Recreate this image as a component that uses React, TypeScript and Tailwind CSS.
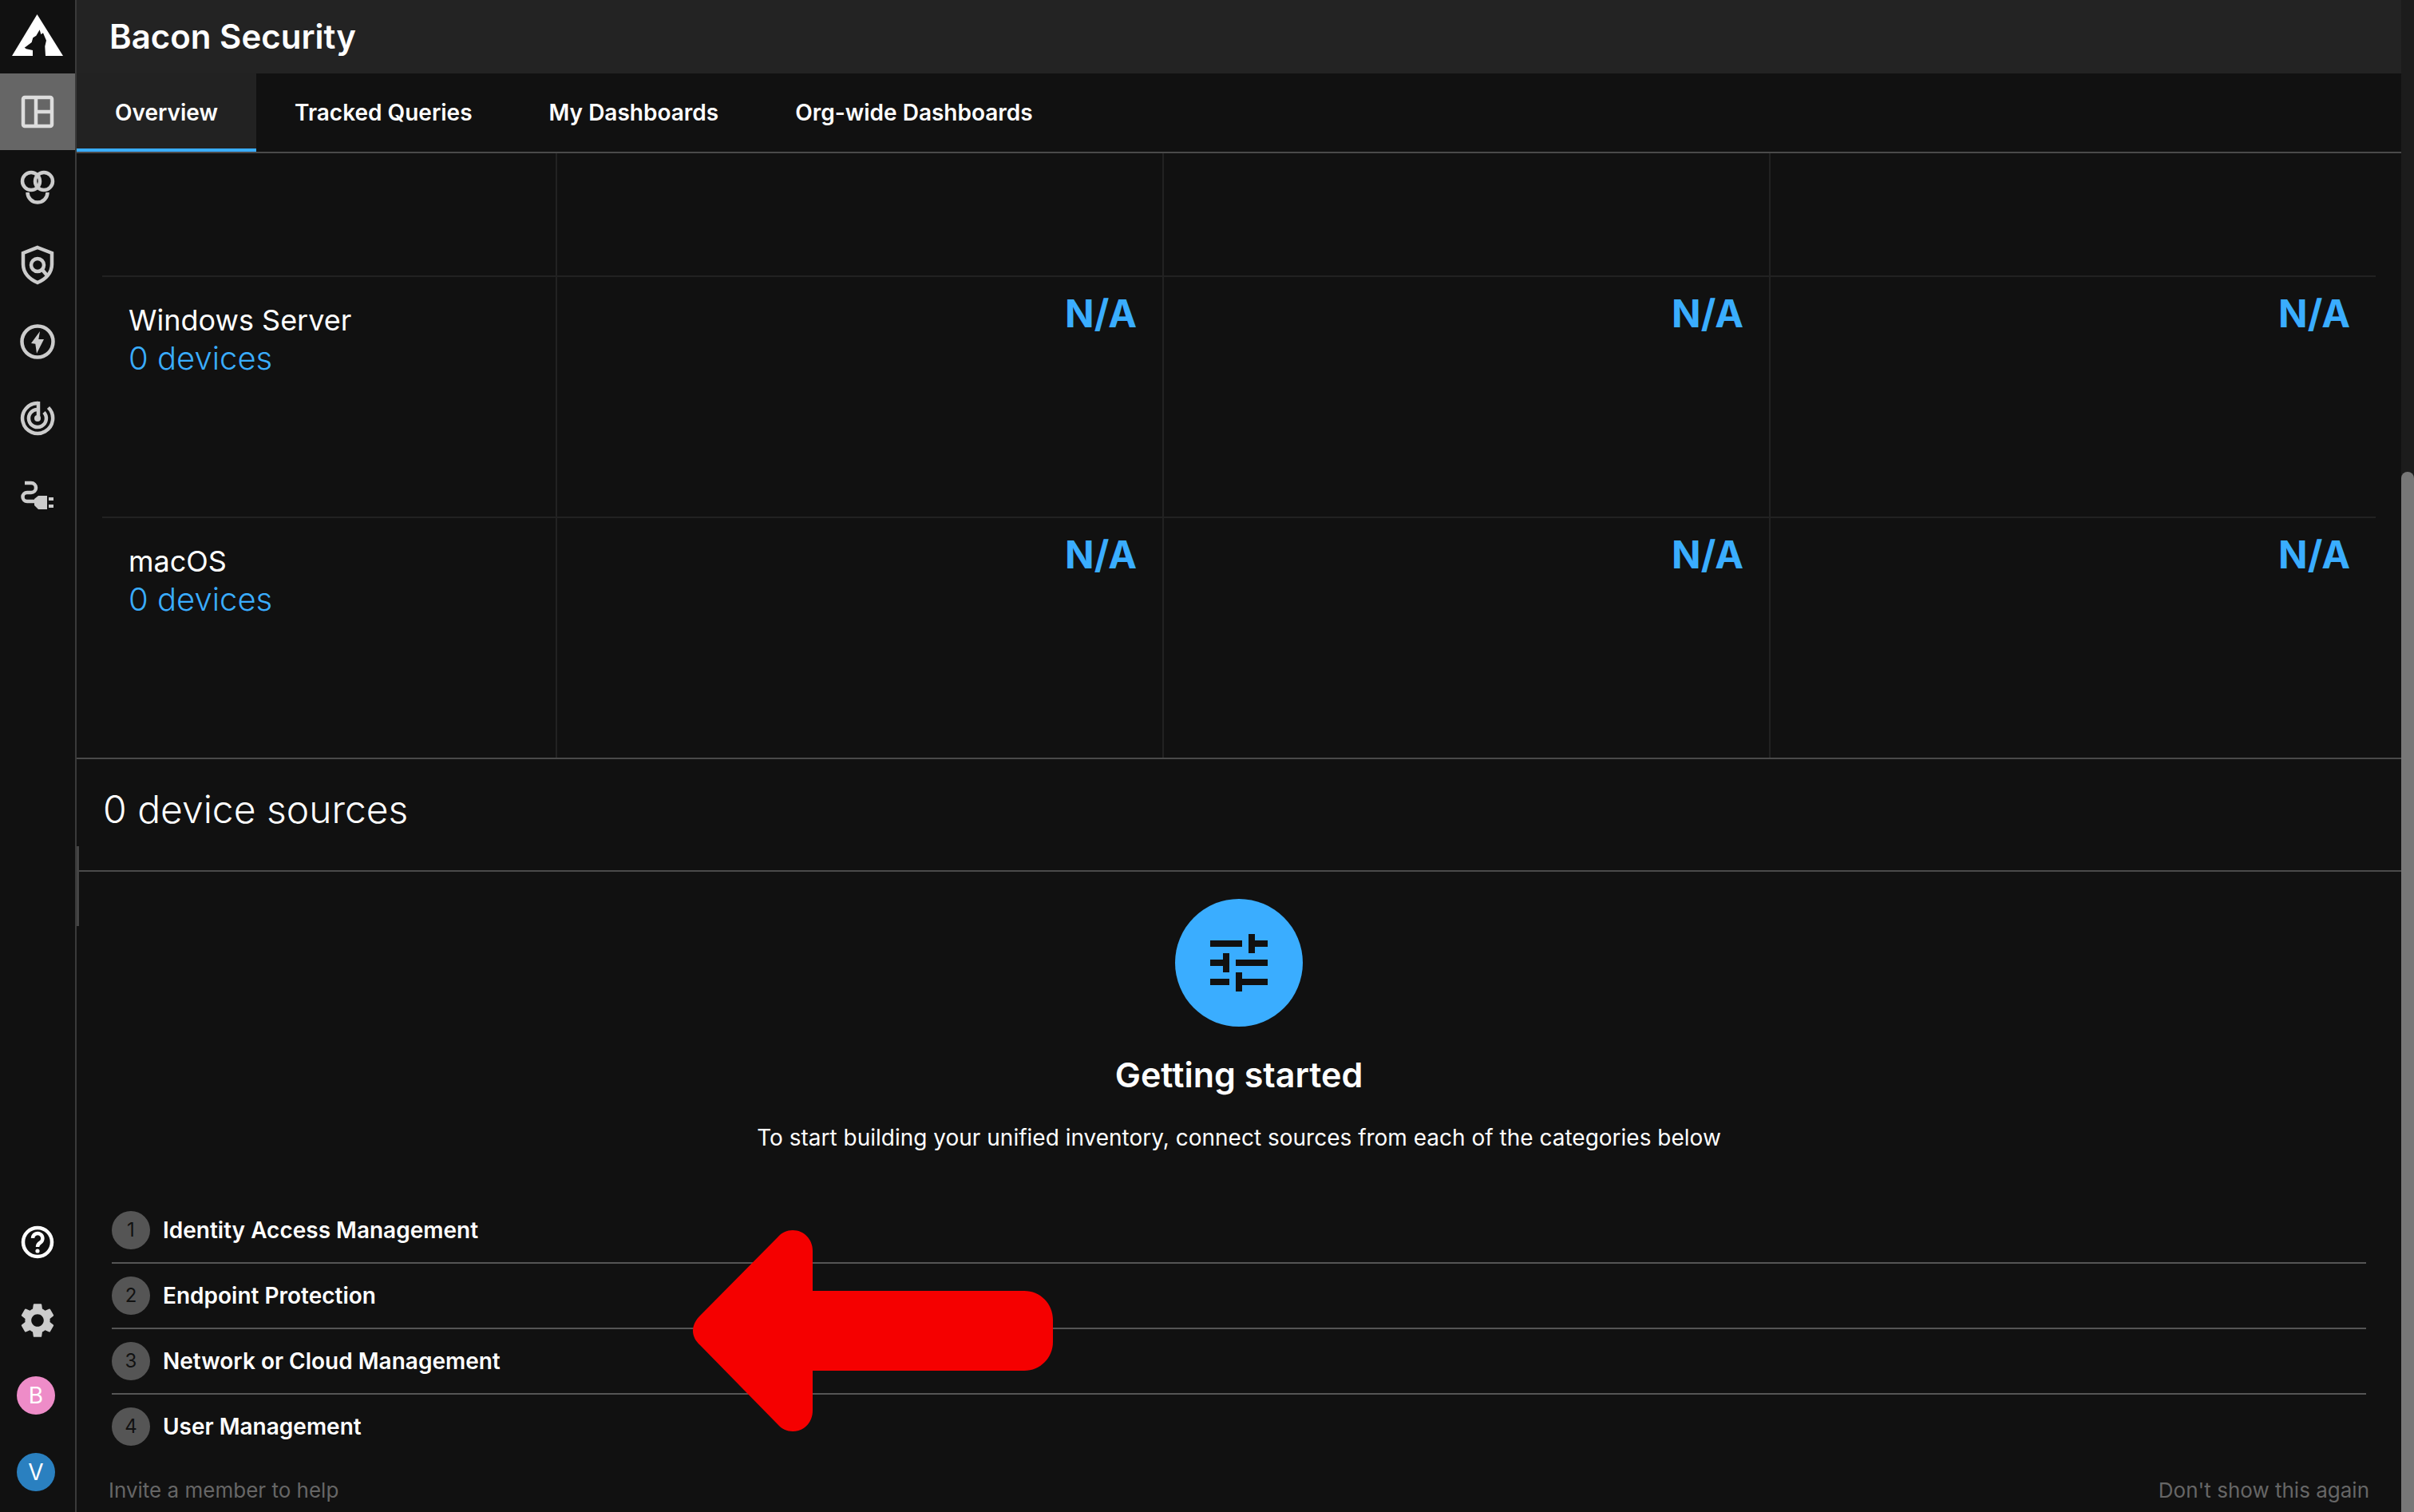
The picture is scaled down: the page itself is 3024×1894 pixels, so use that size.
const ROWS = [
  { name: 'Windows Server', h: 'h-[302px] border-b-2 border-[#222]' },
  { name: 'macOS', h: 'h-[300px]' },
]

const STEPS = ['Identity Access Management', 'Endpoint Protection', 'Network or Cloud Management', 'User Management']

const TABS = ['Tracked Queries', 'My Dashboards', 'Org-wide Dashboards']

function Logo() {
  return (
    <svg width="94" height="92" viewBox="0 0 94 92">
      <polygon points="46.5,18 79,70 15,70" fill="#fff" />
      <polygon
        points="30.7,59.7 39.7,53 41.3,47.3 45.3,44.7 49.7,37.3 51.3,43 54,41.3 58,50.7 56.3,58 57,70 41,70 41,63 33,61.3"
        fill="#111"
      />
    </svg>
  )
}

function NavIcon({ children }: { children: React.ReactNode }) {
  return (
    <svg width="64" height="64" viewBox="0 0 64 64" fill="none" stroke="#ccc" strokeWidth="4.5">
      {children}
    </svg>
  )
}

function Sidebar() {
  return (
    <div className="w-[96px] h-full flex flex-col shrink-0 bg-[#111] border-r-2 border-[#3a3a3a]">
      <div className="h-[92px]">
        <Logo />
      </div>
      <div className="h-[96px] flex items-center justify-center bg-[#666]">
        <NavIcon>
          <g stroke="#ddd">
            <rect x="14" y="14" width="36" height="36" rx="2" />
            <path d="M30 14V50M30 32H50" />
          </g>
        </NavIcon>
      </div>
      <div className="h-[96px] flex items-center justify-center">
        <NavIcon>
          <circle cx="24" cy="23" r="11" />
          <circle cx="40" cy="23" r="11" />
          <path d="M19.5 37A12.5 12.5 0 0 0 44.5 37" />
        </NavIcon>
      </div>
      <div className="h-[96px] flex items-center justify-center">
        <NavIcon>
          <path d="M32 10L50 17V31C50 42 42 50 32 54C22 50 14 42 14 31V17Z" />
          <circle cx="32" cy="32" r="8" />
          <path d="M38 38L44 45" />
        </NavIcon>
      </div>
      <div className="h-[96px] flex items-center justify-center">
        <NavIcon>
          <circle cx="32" cy="32" r="19.5" />
          <polygon points="35,19 24,34 29.3,34.7 31,46.7 40,29 33.3,29" fill="#ccc" stroke="none" />
        </NavIcon>
      </div>
      <div className="h-[96px] flex items-center justify-center">
        <NavIcon>
          <path d="M33 13A19 19 0 1 0 45.5 18.5" />
          <path d="M32 21A11 11 0 1 0 40 24.5" />
          <path d="M33 11V32" />
          <circle cx="32" cy="32" r="4" fill="#ccc" stroke="none" />
        </NavIcon>
      </div>
      <div className="h-[96px] flex items-center justify-center">
        <NavIcon>
          <path d="M16 17H24A6 6 0 0 1 24 29H19A5.5 5.5 0 0 0 19 40H28" />
          <polygon points="28,37 33,33 44,33 44,50 33,50 28,45" fill="#ccc" stroke="none" />
          <rect x="46" y="35" width="6" height="4" fill="#ccc" stroke="none" />
          <rect x="46" y="44" width="6" height="4" fill="#ccc" stroke="none" />
        </NavIcon>
      </div>

      <div className="mt-auto pb-[2px] flex flex-col">
        <div className="h-[96px] mb-[4px] flex items-center justify-center">
          <svg width="64" height="64" viewBox="0 0 64 64" fill="none" stroke="#fff" strokeWidth="4.5">
            <circle cx="32" cy="32" r="18" />
            <path d="M26 27A6.2 6.2 0 1 1 35.5 32.5C33 34 32 35 32 38" />
            <circle cx="32" cy="43" r="2.6" fill="#fff" stroke="none" />
          </svg>
        </div>
        <div className="h-[92px] flex items-center justify-center">
          <svg width="52" height="52" viewBox="0 0 24 24" fill="#ccc">
            <path d="M19.14 12.94c.04-.3.06-.61.06-.94 0-.32-.02-.64-.07-.94l2.03-1.58c.18-.14.23-.41.12-.61l-1.92-3.32c-.12-.22-.37-.29-.59-.22l-2.39.96c-.5-.38-1.03-.7-1.62-.94l-.36-2.54c-.04-.24-.24-.41-.48-.41h-3.84c-.24 0-.43.17-.47.41l-.36 2.54c-.59.24-1.13.57-1.62.94l-2.39-.96c-.22-.08-.47 0-.59.22L2.74 8.87c-.12.21-.08.47.12.61l2.03 1.58c-.05.3-.09.63-.09.94s.02.64.07.94l-2.03 1.58c-.18.14-.23.41-.12.61l1.92 3.32c.12.22.37.29.59.22l2.39-.96c.5.38 1.03.7 1.62.94l.36 2.54c.05.24.24.41.48.41h3.84c.24 0 .44-.17.47-.41l.36-2.54c.59-.24 1.13-.56 1.62-.94l2.39.96c.22.08.47 0 .59-.22l1.92-3.32c.12-.22.07-.47-.12-.61l-2.01-1.58zM12 15.6c-1.98 0-3.6-1.62-3.6-3.6s1.62-3.6 3.6-3.6 3.6 1.62 3.6 3.6-1.62 3.6-3.6 3.6z" />
          </svg>
        </div>
        <div className="h-[96px] flex items-center justify-center">
          <div className="w-[48px] h-[48px] mr-[4px] rounded-full bg-[#ee8cc8] flex items-center justify-center text-white text-[28px]">B</div>
        </div>
        <div className="h-[96px] flex items-center justify-center">
          <div className="w-[48px] h-[48px] mr-[4px] rounded-full bg-[#2a80c0] flex items-center justify-center text-white text-[28px]">V</div>
        </div>
      </div>
    </div>
  )
}

function Tabs() {
  return (
    <div className="h-[100px] shrink-0 flex border-b-2 border-[#4a4a4a]">
      <div className="h-[98px] w-[225px] flex items-center justify-center pt-[4px] bg-[#222] border-b-4 border-[#3aadff] text-white text-[28px] font-semibold">
        Overview
      </div>
      {TABS.map((t) => (
        <div key={t} className="h-[98px] px-[48px] flex items-center text-white text-[28px] font-semibold">
          {t}
        </div>
      ))}
    </div>
  )
}

function Table() {
  return (
    <div className="px-[32px] shrink-0">
      <div className="grid grid-cols-[568px_760px_760px_760px] h-[155px] border-b-2 border-[#222]">
        <div />
        <div className="border-l-2 border-[#222]" />
        <div className="border-l-2 border-[#222]" />
        <div className="border-l-2 border-[#222]" />
      </div>
      {ROWS.map((r) => (
        <div key={r.name} className={`grid grid-cols-[568px_760px_760px_760px] ${r.h}`}>
          <div className="pl-[33px] pt-[31px] text-[36px] leading-[47px] text-white">
            {r.name}
            <div className="text-[40px] text-[#3aadff] font-light">0 devices</div>
          </div>
          {[0, 1, 2].map((c) => (
            <div key={c} className="border-l-2 border-[#222] pt-[18px] pr-[32px] text-right text-[#3aadff] text-[48px] leading-[56px] font-bold">
              N/A
            </div>
          ))}
        </div>
      ))}
    </div>
  )
}

function GettingStarted() {
  return (
    <div className="flex-1 flex flex-col pt-[34px]">
      <div className="w-[160px] h-[160px] mx-auto rounded-full bg-[#3aadff] flex items-center justify-center">
        <svg width="72" height="72" viewBox="0 0 72 72" fill="#111">
          <rect x="0" y="8" width="40" height="8" />
          <rect x="48" y="0" width="8" height="24" />
          <rect x="56" y="8" width="16" height="8" />
          <rect x="0" y="32" width="24" height="8" />
          <rect x="16" y="24" width="8" height="24" />
          <rect x="32" y="32" width="40" height="8" />
          <rect x="0" y="56" width="24" height="8" />
          <rect x="32" y="48" width="8" height="24" />
          <rect x="40" y="56" width="32" height="8" />
        </svg>
      </div>
      <div className="mt-[30px] text-center text-white text-[43px] leading-[60px] font-semibold">Getting started</div>
      <div className="mt-[29px] text-center text-white text-[28px] leading-[40px]">
        To start building your unified inventory, connect sources from each of the categories below
      </div>
      <div className="mt-[56px] ml-[44px] mr-[44px]">
        {STEPS.map((s, i) => (
          <div
            key={s}
            className={`h-[82px] flex items-center gap-[16px] ${i < 3 ? 'border-b-2 border-[#555]' : 'pb-[2px]'}`}
          >
            <div className="w-[48px] h-[48px] rounded-full bg-[#555] flex items-center justify-center text-[#111] text-[24px]">
              {i + 1}
            </div>
            <span className="text-white text-[28px] font-semibold">{s}</span>
          </div>
        ))}
      </div>
      <div className="mt-[18px] pl-[40px] pr-[40px] flex justify-between text-[#666] text-[26px] leading-[40px]">
        <span>Invite a member to help</span>
        <span>Don't show this again</span>
      </div>
    </div>
  )
}

export default function App() {
  return (
    <div className="relative w-[3024px] h-[1894px] flex overflow-hidden bg-[#111] font-['Inter',sans-serif]">
      <Sidebar />
      <div className="flex-1 min-w-0 h-full flex flex-col">
        <div className="h-[92px] shrink-0 flex items-center pl-[41px] pb-[2px] bg-[#232323] text-white text-[42px] font-semibold">
          Bacon Security
        </div>
        <Tabs />
        <Table />
        <div className="h-[2px] shrink-0 bg-[#4a4a4a]" />
        <div className="h-[141px] shrink-0 flex items-center pl-[33px] pb-[14px] border-b-2 border-[#4a4a4a] text-white text-[48px] font-light">
          0 device sources
        </div>
        <GettingStarted />
      </div>
      <div className="w-[16px] h-full shrink-0 flex flex-col pt-[591px] bg-[#1c1c1c]">
        <div className="flex-1 bg-[#777] rounded-t-full" />
      </div>

      {/* resize handle */}
      <div className="absolute left-[96px] top-[1060px] w-[3px] h-[100px] bg-[#444]" />

      {/* red annotation arrow */}
      <svg className="absolute left-0 top-0" width="3024" height="1894" viewBox="0 0 3024 1894" fill="#f50000">
        <path d="M1018 1617H1283C1303 1617 1319 1633 1319 1653V1681C1319 1701 1303 1717 1283 1717H1018V1767C1018 1782 1007 1793 993 1793C986 1793 979 1790 974 1784L877 1685C865 1674 865 1660 877 1648L974 1550C979 1544 986 1541 993 1541C1007 1541 1018 1552 1018 1567Z" />
      </svg>
    </div>
  )
}
